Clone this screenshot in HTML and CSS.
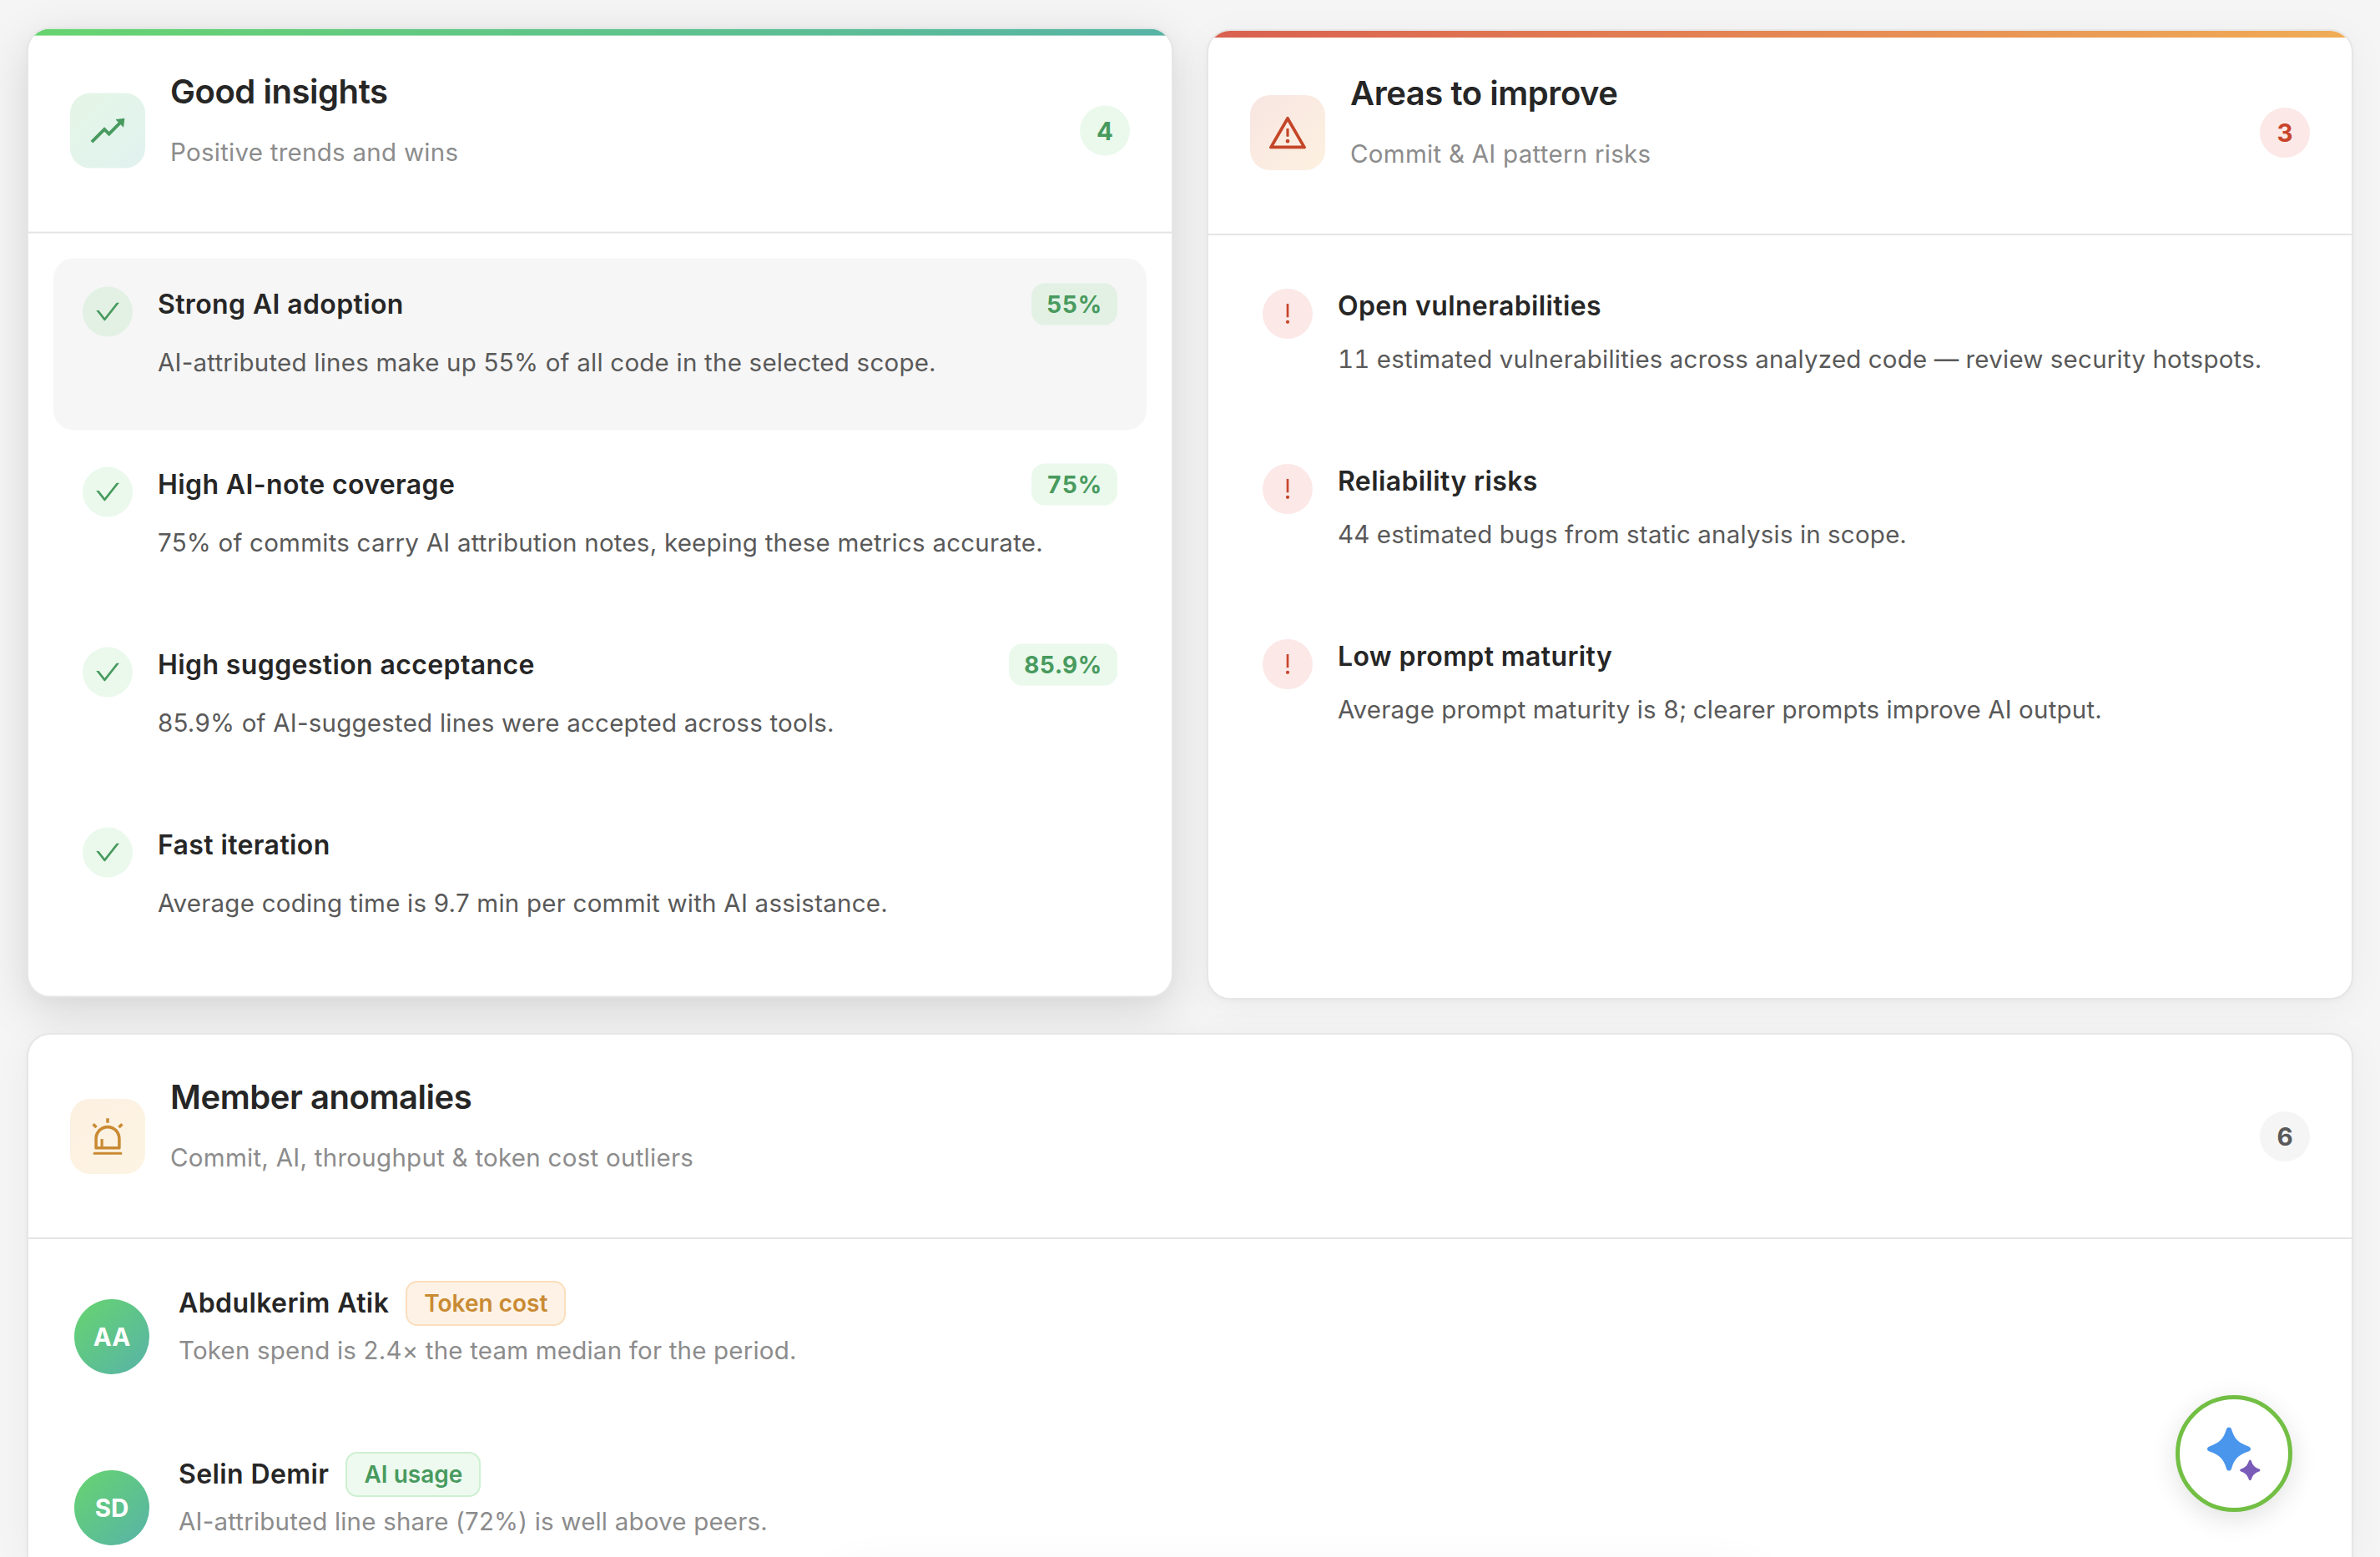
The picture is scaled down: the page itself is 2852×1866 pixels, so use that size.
FILE: index.html
```
<!DOCTYPE html>
<html lang="en">
<head>
    <meta charset="UTF-8">
    <meta name="viewport" content="width=device-width, initial-scale=1.0">
    <title>Team Insights</title>
    <link rel="stylesheet" href="styles.css">
</head>
<body>
    <!-- icon shapes shared by the cards -->
    <svg class="icon-defs" aria-hidden="true">
        <symbol id="icon-check" viewBox="64 64 896 896">
            <path d="M912 190h-69.9c-9.8 0-19.1 4.5-25.1 12.2L404.7 724.5 207 474a32 32 0 00-25.1-12.2H112c-6.7 0-10.4 7.7-6.3 12.9l273.9 347c12.8 16.2 37.4 16.2 50.3 0l488.4-618.9c4.1-5.1.4-12.8-6.3-12.8z"/>
        </symbol>
        <symbol id="icon-exclamation" viewBox="64 64 896 896">
            <path d="M448 804a64 64 0 10128 0 64 64 0 10-128 0zm32-168h64c4.4 0 8-3.6 8-8V164c0-4.4-3.6-8-8-8h-64c-4.4 0-8 3.6-8 8v464c0 4.4 3.6 8 8 8z"/>
        </symbol>
        <symbol id="icon-rise" viewBox="64 64 896 896">
            <path d="M917 211.1l-199.2 24c-6.6.8-9.4 8.9-4.7 13.6l59.3 59.3-226 226-101.8-101.7c-6.3-6.3-16.4-6.2-22.6 0L100.3 754.1a8.03 8.03 0 000 11.3l45 45.2c3.1 3.1 8.2 3.1 11.3 0L433.3 534 535 635.7c6.3 6.2 16.4 6.2 22.6 0L829 364.5l59.3 59.3a8.01 8.01 0 0013.6-4.7l24-199.2c.7-5.1-3.7-9.5-8.9-8.8z"/>
        </symbol>
        <symbol id="icon-warning" viewBox="64 64 896 896">
            <path d="M464 720a48 48 0 1096 0 48 48 0 10-96 0zm16-304v184c0 4.4 3.6 8 8 8h48c4.4 0 8-3.6 8-8V416c0-4.4-3.6-8-8-8h-48c-4.4 0-8 3.6-8 8zm475.7 440l-416-720c-6.2-10.7-16.9-16-27.7-16s-21.6 5.3-27.7 16l-416 720C56 877.4 71.4 904 96 904h832c24.6 0 40-26.6 27.7-48zm-783.5-27.9L512 239.9l339.8 588.2H172.2z"/>
        </symbol>
        <symbol id="icon-alert" viewBox="64 64 896 896">
            <path d="M193 796c0 17.7 14.3 32 32 32h574c17.7 0 32-14.3 32-32V563c0-176.2-142.8-319-319-319S193 386.8 193 563v233zm72-233c0-136.4 110.6-247 247-247s247 110.6 247 247v193H404V585c0-5.5-4.5-10-10-10h-44c-5.5 0-10 4.5-10 10v171h-75V563zm-48.1-252.5l39.6-39.6c3.1-3.1 3.1-8.2 0-11.3l-67.9-67.9a8.03 8.03 0 00-11.3 0l-39.6 39.6a8.03 8.03 0 000 11.3l67.9 67.9c3.1 3.1 8.1 3.1 11.3 0zm669.6-79.2l-39.6-39.6a8.03 8.03 0 00-11.3 0l-67.9 67.9a8.03 8.03 0 000 11.3l39.6 39.6c3.1 3.1 8.2 3.1 11.3 0l67.9-67.9c3.1-3.2 3.1-8.2 0-11.3zM832 892H192c-17.7 0-32 14.3-32 32v24c0 4.4 3.6 8 8 8h688c4.4 0 8-3.6 8-8v-24c0-17.7-14.3-32-32-32zM484 180h56c4.4 0 8-3.6 8-8V76c0-4.4-3.6-8-8-8h-56c-4.4 0-8 3.6-8 8v96c0 4.4 3.6 8 8 8z"/>
        </symbol>
    </svg>

    <main class="insights">
        <section class="card good active">
            <header class="card-header">
                <div class="card-icon"><svg><use href="#icon-rise"/></svg></div>
                <div class="card-heading">
                    <h2>Good insights</h2>
                    <p>Positive trends and wins</p>
                </div>
                <span class="count">4</span>
            </header>
            <ul class="insight-list">
                <li class="insight hovered">
                    <span class="status"><svg><use href="#icon-check"/></svg></span>
                    <div class="insight-body">
                        <div class="insight-head"><h3>Strong AI adoption</h3><span class="metric">55%</span></div>
                        <p>AI-attributed lines make up 55% of all code in the selected scope.</p>
                    </div>
                </li>
                <li class="insight">
                    <span class="status"><svg><use href="#icon-check"/></svg></span>
                    <div class="insight-body">
                        <div class="insight-head"><h3>High AI-note coverage</h3><span class="metric">75%</span></div>
                        <p>75% of commits carry AI attribution notes, keeping these metrics accurate.</p>
                    </div>
                </li>
                <li class="insight">
                    <span class="status"><svg><use href="#icon-check"/></svg></span>
                    <div class="insight-body">
                        <div class="insight-head"><h3>High suggestion acceptance</h3><span class="metric">85.9%</span></div>
                        <p>85.9% of AI-suggested lines were accepted across tools.</p>
                    </div>
                </li>
                <li class="insight">
                    <span class="status"><svg><use href="#icon-check"/></svg></span>
                    <div class="insight-body">
                        <div class="insight-head"><h3>Fast iteration</h3></div>
                        <p>Average coding time is 9.7 min per commit with AI assistance.</p>
                    </div>
                </li>
            </ul>
        </section>

        <section class="card improve">
            <header class="card-header">
                <div class="card-icon"><svg><use href="#icon-warning"/></svg></div>
                <div class="card-heading">
                    <h2>Areas to improve</h2>
                    <p>Commit &amp; AI pattern risks</p>
                </div>
                <span class="count">3</span>
            </header>
            <ul class="insight-list">
                <li class="insight">
                    <span class="status"><svg><use href="#icon-exclamation"/></svg></span>
                    <div class="insight-body">
                        <div class="insight-head"><h3>Open vulnerabilities</h3></div>
                        <p>11 estimated vulnerabilities across analyzed code — review security hotspots.</p>
                    </div>
                </li>
                <li class="insight">
                    <span class="status"><svg><use href="#icon-exclamation"/></svg></span>
                    <div class="insight-body">
                        <div class="insight-head"><h3>Reliability risks</h3></div>
                        <p>44 estimated bugs from static analysis in scope.</p>
                    </div>
                </li>
                <li class="insight">
                    <span class="status"><svg><use href="#icon-exclamation"/></svg></span>
                    <div class="insight-body">
                        <div class="insight-head"><h3>Low prompt maturity</h3></div>
                        <p>Average prompt maturity is 8; clearer prompts improve AI output.</p>
                    </div>
                </li>
            </ul>
        </section>

        <section class="card anomalies">
            <header class="card-header">
                <div class="card-icon"><svg><use href="#icon-alert"/></svg></div>
                <div class="card-heading">
                    <h2>Member anomalies</h2>
                    <p>Commit, AI, throughput &amp; token cost outliers</p>
                </div>
                <span class="count">6</span>
            </header>
            <ul class="member-list">
                <li class="member">
                    <span class="avatar">AA</span>
                    <div class="member-body">
                        <div class="member-head"><h3>Abdulkerim Atik</h3><span class="tag tag-cost">Token cost</span></div>
                        <p>Token spend is 2.4× the team median for the period.</p>
                    </div>
                </li>
                <li class="member">
                    <span class="avatar">SD</span>
                    <div class="member-body">
                        <div class="member-head"><h3>Selin Demir</h3><span class="tag tag-usage">AI usage</span></div>
                        <p>AI-attributed line share (72%) is well above peers.</p>
                    </div>
                </li>
            </ul>
        </section>
    </main>

    <div class="bottom-bar"></div>

    <button type="button" class="assistant" aria-label="Assistant">
        <svg viewBox="0 0 80 80">
            <path fill="#4a96ec" d="M34 8.5c1.7 0 2.6 1 3.1 2.6C40.500 22.500 45.500 27.500 57.400 31.400 59 32 60 32.900 60 34.500s-1 2.500-2.600 3.100C45.500 41.500 40.500 46.500 37.100 57.900 36.600 59.500 35.700 60.500 34 60.500s-2.600-1-3.100-2.600C27.500 46.500 22.500 41.500 10.600 37.600 9 37 8 36.100 8 34.500s1-2.500 2.600-3.100C22.500 27.500 27.500 22.500 30.900 11.100 31.400 9.500 32.300 8.500 34 8.500z"/>
            <path fill="#7a5bb8" d="M59.300 47.800c.8 0 1.200.5 1.500 1.200 1.600 5 4.200 7.700 9.300 9.500.8.300 1.300.7 1.300 1.500s-.5 1.200-1.300 1.500c-5.100 1.800-7.700 4.500-9.300 9.500-.3.700-.7 1.200-1.500 1.200s-1.200-.5-1.500-1.200c-1.600-5-4.200-7.700-9.300-9.500-.8-.3-1.300-.7-1.300-1.500s.5-1.200 1.300-1.500c5.100-1.800 7.700-4.500 9.300-9.500.3-.7.700-1.200 1.500-1.200z"/>
        </svg>
    </button>
</body>
</html>
```
FILE: styles.css
```
* {
    box-sizing: border-box;
}
body {
    font-family: Inter, "Liberation Sans", sans-serif;
    margin: 0;
    height: 1866px;
    overflow: hidden;
    background-color: #f5f5f5;
    color: #262626;
}
h2, h3, p, ul {
    margin: 0;
    padding: 0;
}
ul {
    list-style: none;
}
svg {
    display: block;
    fill: currentColor;
}
.icon-defs {
    display: none;
}
.insights {
    display: grid;
    grid-template-columns: 1fr 1fr;
    grid-template-rows: 1163px auto;
    gap: 40px;
    height: 1866px;
    padding: 35px 32px 0;
}

/* cards */
.card {
    position: relative;
    overflow: hidden;
    background-color: #fff;
    border: 2px solid #e6e6e6;
    border-radius: 28px;
    box-shadow: 0 2px 6px rgba(0, 0, 0, 0.03), 0 8px 48px rgba(0, 0, 0, 0.045);
}
.card.active {
    transform: translateY(-2.4px);
    box-shadow: 0 16px 56px rgba(0, 0, 0, 0.13), 0 4px 16px rgba(0, 0, 0, 0.02);
}
.card.anomalies {
    grid-column: span 2;
    border-bottom: none;
    border-radius: 28px 28px 0 0;
}
.card.good::before,
.card.improve::before {
    content: "";
    position: absolute;
    top: 0;
    left: 0;
    right: 0;
    height: 8px;
}
.card.good::before {
    background: linear-gradient(90deg, #67d46f, #57b3a5);
}
.card.improve::before {
    background: linear-gradient(90deg, #d9604f, #f0ad56);
}
.card-header {
    display: flex;
    align-items: center;
    height: 245px;
    padding: 0 50px;
    border-bottom: 2px solid #e4e4e4;
}
.card-icon {
    display: flex;
    align-items: center;
    justify-content: center;
    width: 90px;
    height: 90px;
    margin-right: 30px;
    border-radius: 24px;
}
.card-icon svg {
    width: 44px;
    height: 44px;
}
.good .card-icon {
    color: #489a5e;
    background: linear-gradient(135deg, #e5f6e6, #e1f2f0);
}
.improve .card-icon {
    color: #c44528;
    background: linear-gradient(135deg, #f8e5e2, #fdf1e0);
}
.anomalies .card-icon {
    color: #c98a33;
    background: linear-gradient(135deg, #fcf0e1, #fdf4e4);
}
.card-heading {
    flex: 1;
}
.card-heading h2 {
    font-size: 40px;
    font-weight: 600;
    line-height: 50px;
    letter-spacing: -0.45px;
}
.card-heading p {
    margin: 25px 0;
    font-size: 29.5px;
    line-height: 44px;
    letter-spacing: 0.27px;
    color: #8c8c8c;
}
.count {
    width: 60px;
    border-radius: 50%;
    font-size: 29.5px;
    font-weight: 700;
    line-height: 60px;
    text-align: center;
    color: #595959;
    background-color: #f5f5f5;
}
.good .count,
.good .status,
.metric {
    color: #489a5e;
    background-color: rgba(80, 205, 97, 0.12);
}
.improve .count,
.improve .status {
    color: #c8452b;
    background-color: rgba(220, 55, 45, 0.115);
}

/* insight rows */
.insight-list {
    display: flex;
    flex-direction: column;
    gap: 10px;
    padding: 30px;
}
.insight {
    display: flex;
    height: 206px;
    padding: 30px 35px;
    border-radius: 24px;
}
.improve .insight {
    height: 200px;
}
.insight.hovered {
    background-color: #f6f6f6;
}
.status {
    display: flex;
    align-items: center;
    justify-content: center;
    flex: none;
    width: 60px;
    height: 60px;
    margin: 4px 30px 0 0;
    border-radius: 50%;
}
.status svg {
    width: 30px;
    height: 30px;
}
.insight-body {
    flex: 1;
}
.insight-head {
    display: flex;
    align-items: center;
    justify-content: space-between;
    height: 50px;
}
.insight h3 {
    margin-bottom: 2px;
    font-size: 32px;
    font-weight: 600;
    letter-spacing: 0.38px;
}
.metric {
    padding: 0 18px;
    border-radius: 16px;
    font-size: 28px;
    font-weight: 700;
    line-height: 50px;
    letter-spacing: 0.7px;
    font-variant-numeric: tabular-nums;
}
.insight p {
    margin-top: 21px;
    font-size: 29.5px;
    line-height: 46px;
    letter-spacing: 0.23px;
    white-space: nowrap;
    color: #595959;
}
.improve .insight p {
    margin-top: 15px;
    font-variant-numeric: tabular-nums;
}

/* members */
.member-list {
    padding: 14px 55px;
}
.member {
    display: flex;
    align-items: center;
    height: 205px;
}
.avatar {
    width: 90px;
    margin-right: 35px;
    border-radius: 50%;
    font-size: 29.5px;
    font-weight: 700;
    line-height: 90px;
    text-align: center;
    color: #fff;
    background: linear-gradient(135deg, #67d46f, #57b3a8);
}
.member-head {
    display: flex;
    align-items: center;
    gap: 20px;
}
.member h3 {
    font-size: 32px;
    font-weight: 600;
    letter-spacing: 0.4px;
}
.tag {
    padding: 0 20px;
    border: 2px solid;
    border-radius: 14px;
    font-size: 28px;
    font-weight: 600;
    line-height: 50px;
}
.tag-cost {
    color: #c98a33;
    background-color: #fdf2e5;
    border-color: #fbdfbd;
}
.tag-usage {
    color: #489a5e;
    background-color: #eefaf0;
    border-color: #cdf0d1;
}
.member p {
    margin: 6px 0 28px;
    font-size: 29.5px;
    line-height: 46px;
    letter-spacing: 0.2px;
    color: #8c8c8c;
}

/* bar docked below the fold, only its shadow reaches the page */
.bottom-bar {
    position: fixed;
    left: 990px;
    top: 1880px;
    width: 1130px;
    height: 100px;
    border-radius: 50px;
    box-shadow: 0 0 56px rgba(0, 0, 0, 0.05);
}

/* floating assistant button */
.assistant {
    position: fixed;
    right: 105px;
    bottom: 54px;
    display: flex;
    align-items: center;
    justify-content: center;
    width: 140px;
    height: 140px;
    padding: 0;
    border: 5px solid #72bf44;
    border-radius: 50%;
    background-color: #fff;
    box-shadow: 0 8px 32px rgba(0, 0, 0, 0.12);
    cursor: pointer;
}
.assistant svg {
    width: 80px;
    height: 80px;
}
```
